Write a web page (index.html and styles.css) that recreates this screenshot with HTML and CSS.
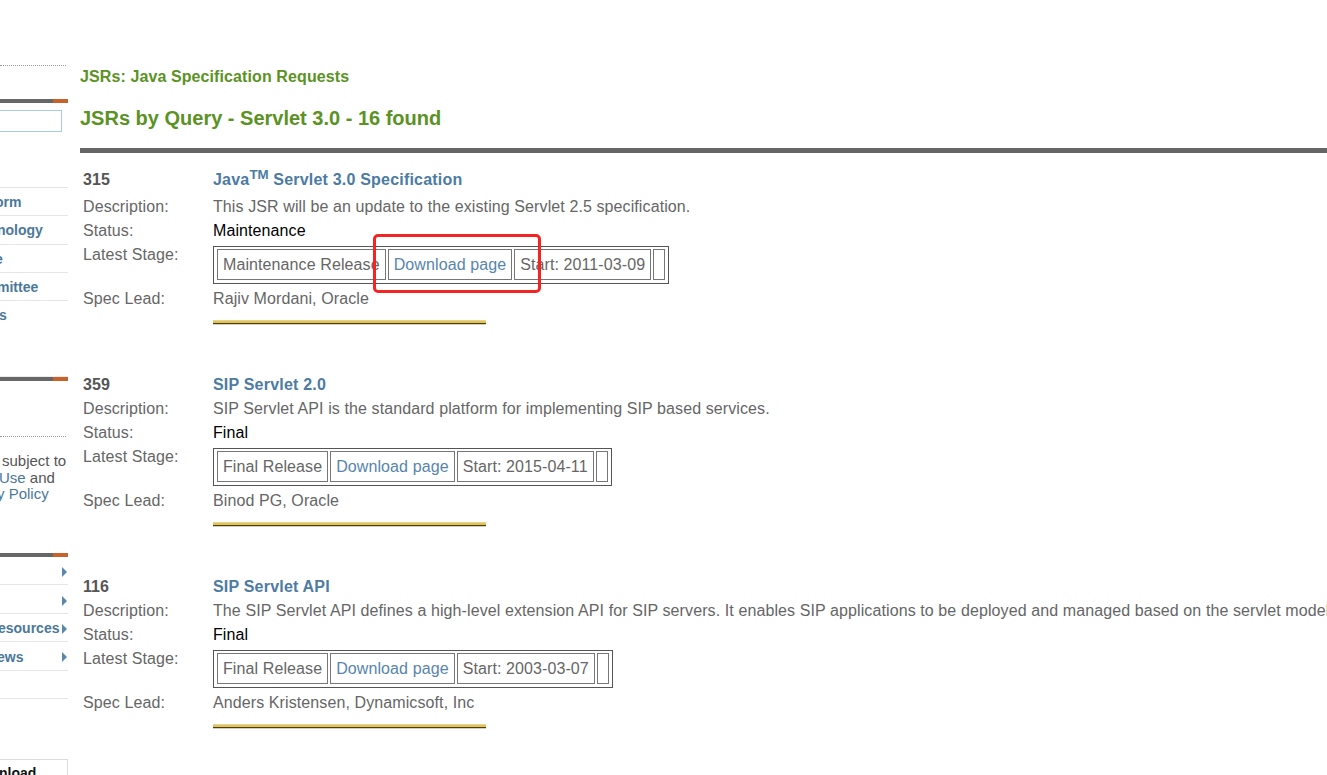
FILE: index.html
```html
<!DOCTYPE html>
<html lang="en">
<head>
<meta charset="utf-8">
<title>JSRs by Query - Servlet 3.0</title>
<link rel="stylesheet" href="styles.css">
</head>
<body>
<div class="page">
  <aside class="sidebar">
    <div class="dotted"></div>
    <div class="bar bar1"></div>
    <div class="search"></div>
    <ul class="nav">
      <li><a class="i1">orm</a></li>
      <li><a class="i2">nology</a></li>
      <li><a class="i3">e</a></li>
      <li><a class="i4">mittee</a></li>
      <li><a class="i5">s</a></li>
    </ul>
    <div class="bar bar2"></div>
    <div class="dotted dotted2"></div>
    <p class="legal">
      <span class="l1">subject to</span>
      <span class="l2"><a>Use</a> and</span>
      <span class="l3"><a>y Policy</a></span>
    </p>
    <div class="bar bar3"></div>
    <ul class="nav2">
      <li><a></a><span class="arrow"></span></li>
      <li><a></a><span class="arrow"></span></li>
      <li><a class="j3">esources</a><span class="arrow"></span></li>
      <li><a class="j4">ews</a><span class="arrow"></span></li>
      <li></li>
    </ul>
    <div class="dlbox"><span>nload</span></div>
  </aside>

  <main class="main">
    <p class="crumb">JSRs: Java Specification Requests</p>
    <h1 class="title">JSRs by Query - Servlet 3.0 - 16 found</h1>
    <div class="rule"></div>

    <table class="entry first">
      <tr class="head"><td class="lbl num">315</td><td class="val"><a class="jsr">Java<sup>TM</sup> Servlet 3.0 Specification</a></td></tr>
      <tr><td class="lbl">Description:</td><td class="val desc">This JSR will be an update to the existing Servlet 2.5 specification.</td></tr>
      <tr><td class="lbl">Status:</td><td class="val status">Maintenance</td></tr>
      <tr><td class="lbl">Latest Stage:</td><td class="val">
        <table class="stage"><tr><td>Maintenance Release</td><td><a>Download page</a></td><td>Start: 2011-03-09</td><td></td></tr></table>
      </td></tr>
      <tr><td class="lbl">Spec Lead:</td><td class="val desc">Rajiv Mordani, Oracle</td></tr>
      <tr><td></td><td class="sep"><div class="goldbar"></div></td></tr>
    </table>

    <table class="entry">
      <tr><td class="lbl num">359</td><td class="val"><a class="jsr">SIP Servlet 2.0</a></td></tr>
      <tr><td class="lbl">Description:</td><td class="val desc">SIP Servlet API is the standard platform for implementing SIP based services.</td></tr>
      <tr><td class="lbl">Status:</td><td class="val status">Final</td></tr>
      <tr><td class="lbl">Latest Stage:</td><td class="val">
        <table class="stage"><tr><td>Final Release</td><td><a>Download page</a></td><td>Start: 2015-04-11</td><td></td></tr></table>
      </td></tr>
      <tr><td class="lbl">Spec Lead:</td><td class="val desc">Binod PG, Oracle</td></tr>
      <tr><td></td><td class="sep"><div class="goldbar"></div></td></tr>
    </table>

    <table class="entry">
      <tr><td class="lbl num">116</td><td class="val"><a class="jsr">SIP Servlet API</a></td></tr>
      <tr><td class="lbl">Description:</td><td class="val desc">The SIP Servlet API defines a high-level extension API for SIP servers. It enables SIP applications to be deployed and managed based on the servlet model.</td></tr>
      <tr><td class="lbl">Status:</td><td class="val status">Final</td></tr>
      <tr><td class="lbl">Latest Stage:</td><td class="val">
        <table class="stage"><tr><td>Final Release</td><td><a>Download page</a></td><td>Start: 2003-03-07</td><td></td></tr></table>
      </td></tr>
      <tr><td class="lbl">Spec Lead:</td><td class="val desc">Anders Kristensen, Dynamicsoft, Inc</td></tr>
      <tr><td></td><td class="sep"><div class="goldbar"></div></td></tr>
    </table>
  </main>
</div>
<div class="annot"></div>
</body>
</html>
```
FILE: styles.css
```css
html, body {
  margin: 0;
  padding: 0;
  overflow: hidden;
  background: #fff;
}
body {
  font-family: "Liberation Sans", Arial, sans-serif;
  font-size: 16px;
  color: #666;
  position: relative;
  height: 775px;
}
a { text-decoration: none; }

.page {
  display: flex;
  align-items: flex-start;
}

/* ---------- sidebar ---------- */
.sidebar {
  width: 68px;
  flex: 0 0 68px;
  overflow: hidden;
  padding-top: 65px;
}
.dotted {
  width: 66px;
  height: 0;
  border-top: 1px dotted #9a9a9a;
}
.bar {
  height: 4px;
  background: linear-gradient(to right, #676767 0 53px, #c9612b 53px 68px);
}
.bar1 { margin-top: 33px; }
.search {
  margin-top: 7px;
  margin-left: -10px;
  width: 72px;
  height: 22px;
  box-sizing: border-box;
  border: 1px solid #a9ccd8;
}
.nav, .nav2 {
  list-style: none;
  margin: 0;
  padding: 0;
}
.nav { margin-top: 55px; }
.nav li {
  height: 28.3px;
  box-sizing: border-box;
  border-top: 1px solid #e6e6e6;
  line-height: 28px;
  white-space: nowrap;
}
.nav a, .nav2 a {
  display: block;
  font-size: 14px;
  font-weight: bold;
  color: #4b789a;
}
.nav .i1 { text-indent: -5px; }
.nav .i2 { text-indent: -3px; }
.nav .i3 { text-indent: -5px; }
.nav .i4 { text-indent: -3px; }
.nav .i5 { text-indent: -1px; }

.bar2 { margin-top: 49px; box-shadow: 0 -1px 0 #ececec; }
.dotted2 { margin-top: 55px; }
.legal {
  margin: 16px 0 0;
  font-size: 15px;
  line-height: 16.5px;
  color: #555;
  white-space: nowrap;
}
.legal span { display: block; }
.legal a { color: #4b789a; }
.legal .l1 { padding-left: 2px; }
.legal .l2 { margin-left: -1px; }
.legal .l3 { margin-left: -3px; }

.bar3 { margin-top: 50px; }
.nav2 li {
  height: 28.4px;
  box-sizing: border-box;
  border-bottom: 1px solid #e6e6e6;
  padding-top: 3px;
  line-height: 25px;
  display: flex;
  align-items: center;
  justify-content: space-between;
  white-space: nowrap;
}
.nav2 .j3 { text-indent: -2px; }
.nav2 .j4 { text-indent: -3px; }
.arrow {
  flex: 0 0 auto;
  width: 0;
  height: 0;
  margin-right: 1px;
  border-left: 5px solid #5a88ab;
  border-top: 5px solid transparent;
  border-bottom: 5px solid transparent;
}
.dlbox {
  margin-top: 60px;
  height: 40px;
  box-sizing: border-box;
  border: 1px solid #dcdcdc;
  border-left: none;
  padding-top: 4px;
  font-size: 14px;
  font-weight: bold;
  color: #111;
  line-height: 18px;
  white-space: nowrap;
  text-indent: -1px;
}

/* ---------- main ---------- */
.main {
  flex: 1 1 auto;
  min-width: 0;
  margin-left: 12px;
  padding-top: 68px;
}
.crumb {
  margin: 0;
  font-size: 16px;
  font-weight: bold;
  line-height: 18px;
  letter-spacing: 0.1px;
  color: #5b9224;
}
.title {
  margin: 20px 0 0;
  font-size: 20px;
  font-weight: bold;
  line-height: 24px;
  color: #5b9224;
}
.rule {
  margin-top: 18px;
  height: 5px;
  background: #666;
}

.entry {
  width: 100%;
  table-layout: fixed;
  border-collapse: separate;
  border-spacing: 0;
  margin-bottom: 49px;
  letter-spacing: 0.1px;
}
.entry.first { margin-top: 13px; }
.entry td {
  padding: 3px;
  line-height: 18px;
  vertical-align: top;
  white-space: nowrap;
}
.entry.first tr.head td {
  padding-top: 5px;
  padding-bottom: 6px;
}
.entry td.lbl {
  width: 124px;
  color: #666;
}
.entry td.num {
  font-weight: bold;
  color: #555;
}
.jsr {
  font-weight: bold;
  letter-spacing: 0.2px;
  color: #4c7ba3;
}
.jsr sup { line-height: 0; letter-spacing: 0; }
.val.desc { color: #666; }
.val.status { color: #000; }

.stage {
  border: 1px solid #555;
  border-spacing: 2px;
  padding: 0 1px 1px 1px;
}
.entry .stage td {
  border: 1px solid #777;
  padding: 5px;
  line-height: 19px;
  color: #666;
}
.stage a { color: #5785ad; }

.entry td.sep { padding: 9px 3px 0; }
.goldbar {
  width: 273px;
  height: 2px;
  background: #f4c51f;
  border-top: 1px solid #d2d2d2;
  border-bottom: 1px solid #3d3d3d;
  box-shadow: 0 1px 0 #cfcfcf;
}

/* annotation overlay */
.annot {
  position: absolute;
  left: 373px;
  top: 234px;
  width: 168px;
  height: 59px;
  box-sizing: border-box;
  border: 3px solid #f42424;
  border-radius: 5px;
}
```
